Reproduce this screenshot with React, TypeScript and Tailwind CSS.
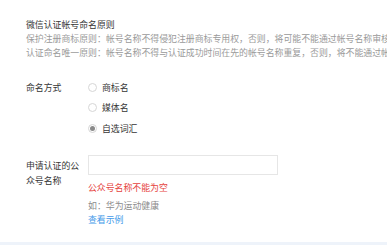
import React from "react";

const font = { fontFamily: '"Microsoft YaHei", "Noto Sans CJK SC", "Noto Sans", sans-serif' };

function T({ text }: { text: string }) {
  const parts = text.split(/([：，])/);
  return (
    <>
      {parts.map((p, i) =>
        p === "：" || p === "，" ? (
          <span key={i} className="inline-block w-[1em]">
            {p}
          </span>
        ) : (
          <React.Fragment key={i}>{p}</React.Fragment>
        )
      )}
    </>
  );
}

function Radio({ label, checked }: { label: string; checked?: boolean }) {
  return (
    <div className="flex h-[20.5px] items-center">
      <span className="flex h-[9px] w-[9px] items-center justify-center rounded-full border border-[#d6d6d6] bg-white">
        {checked && <span className="h-[5px] w-[5px] rounded-full bg-[#8a8a8a]" />}
      </span>
      <span className="ml-[5px] text-[#353535]">{label}</span>
    </div>
  );
}

export default function App() {
  return (
    <div className="flex h-[245px] w-[387px] flex-col overflow-hidden bg-white text-[8.9px] leading-[13.5px]" style={font}>
      <div className="flex-1 pl-[26px]">
        <div className="pt-[18px]">
          <div className="whitespace-nowrap text-[#353535]">微信认证帐号命名原则</div>
          <div className="mt-[0.5px] whitespace-nowrap text-[#9a9a9a]">
            <T text="保护注册商标原则：帐号名称不得侵犯注册商标专用权，否则，将可能不能通过帐号名称审核" />
          </div>
          <div className="whitespace-nowrap text-[#9a9a9a]">
            <T text="认证命名唯一原则：帐号名称不得与认证成功时间在先的帐号名称重复，否则，将不能通过帐号名称审核" />
          </div>
        </div>

        <div className="mt-[18px] flex">
          <div className="flex h-[20.5px] w-[62px] items-center text-[#353535]">命名方式</div>
          <div className="flex flex-col">
            <Radio label="商标名" />
            <Radio label="媒体名" />
            <Radio label="自选词汇" checked />
          </div>
        </div>

        <div className="mt-[16px] flex">
          <div className="w-[62px] pt-[3px]">
            <div className="w-[55px] leading-[15px] text-[#353535]">申请认证的公众号名称</div>
          </div>
          <div className="flex flex-col">
            <div className="h-[20px] w-[190px] border border-[#e6e6e6] bg-white" />
            <div className="mt-[6.5px] text-[#e64340]">公众号名称不能为空</div>
            <div className="mt-[4px] text-[#8d8d8d]">
              <T text="如：华为运动健康" />
            </div>
            <div className="mt-[1px] text-[#459ae9]">查看示例</div>
          </div>
        </div>
      </div>
      <div className="h-[3px] bg-[#eef3fa]" />
    </div>
  );
}
